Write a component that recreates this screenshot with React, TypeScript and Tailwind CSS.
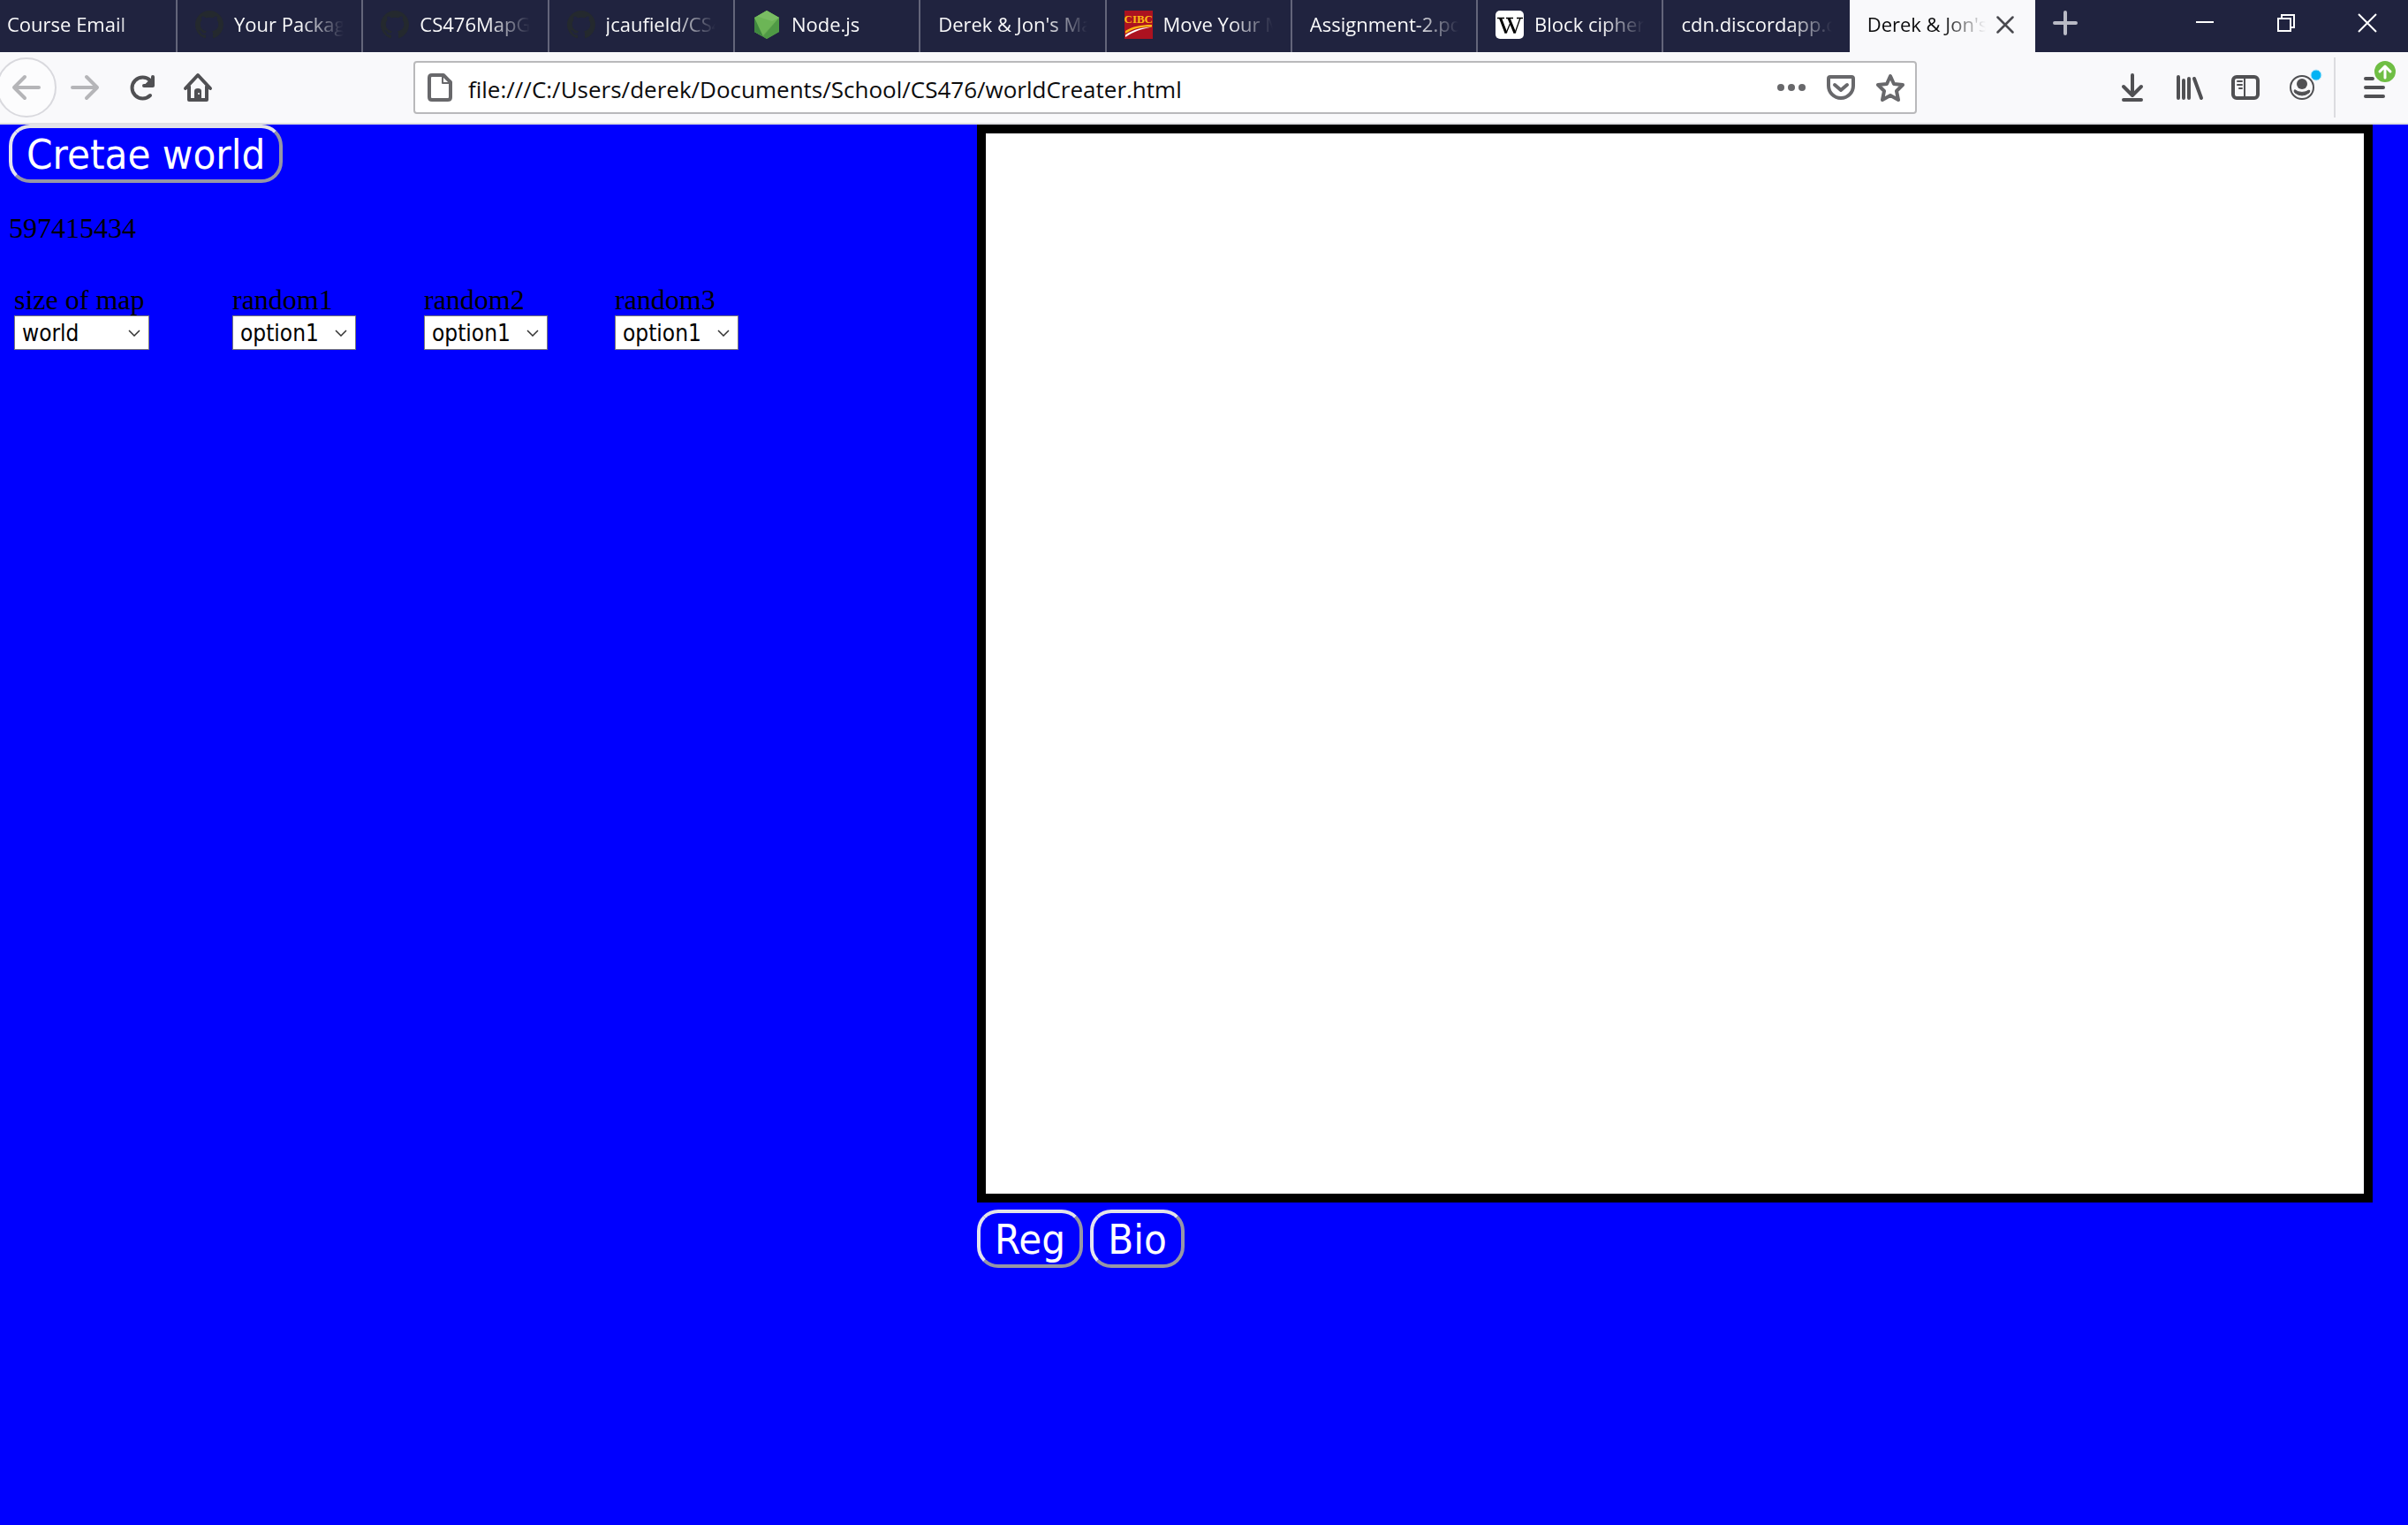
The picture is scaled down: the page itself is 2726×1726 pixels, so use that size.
import type { ReactNode } from "react";

const GITHUB =
  "M8 0C3.58 0 0 3.58 0 8c0 3.54 2.29 6.53 5.47 7.59.4.07.55-.17.55-.38 0-.19-.01-.82-.01-1.49-2.01.37-2.53-.49-2.69-.94-.09-.23-.48-.94-.82-1.13-.28-.15-.68-.52-.01-.53.63-.01 1.08.58 1.23.82.72 1.21 1.87.87 2.33.66.07-.52.28-.87.51-1.07-1.78-.2-3.64-.89-3.64-3.95 0-.87.31-1.59.82-2.15-.08-.2-.36-1.02.08-2.12 0 0 .67-.21 2.2.82.64-.18 1.32-.27 2-.27s1.36.09 2 .27c1.53-1.04 2.2-.82 2.2-.82.44 1.1.16 1.92.08 2.12.51.56.82 1.27.82 2.15 0 3.07-1.87 3.75-3.65 3.95.29.25.54.73.54 1.48 0 1.07-.01 1.93-.01 2.2 0 .21.15.46.55.38A8.01 8.01 0 0 0 16 8c0-4.42-3.58-8-8-8Z";

function GithubIcon() {
  return (
    <svg viewBox="0 0 16 16" className="size-8 shrink-0 fill-[#24292e]" aria-hidden="true">
      <path d={GITHUB} />
    </svg>
  );
}

function NodeIcon() {
  return (
    <svg viewBox="0 0 32 32" className="size-8 shrink-0" aria-hidden="true">
      <path d="M16 0 30 8v16l-14 8L2 24V8Z" fill="#5fa04e" />
      <path d="M16 0 30 8 11 29 2 24V8Z" fill="#6cb556" />
      <path d="M2 8 12 29.500 2 24Z" fill="#3f873f" />
      <path d="M16 0 30 8 22 12 5 6.500Z" fill="#79bd63" />
      <path d="M30 8v16l-14 8-4-2.500Z" fill="#4f9a45" />
    </svg>
  );
}

function CibcIcon() {
  return (
    <span className="relative block size-8 shrink-0 overflow-hidden bg-[#ac1220] text-center">
      <span className="block pt-0.5 font-['Liberation_Serif',serif] text-[13px] leading-4 font-bold text-[#fdb913]">
        CIBC
      </span>
      <svg viewBox="0 0 32 32" className="absolute inset-0 size-8" aria-hidden="true">
        <path d="M1 23C9 18 18 16 31 16v2.500C18 18 10 20 1 26Z" fill="#fdb913" />
        <path d="M1 27.500C9 22 17 19.500 31 18.500 18 21 11 23.500 1 30Z" fill="#fff" />
      </svg>
    </span>
  );
}

function WikipediaIcon() {
  return (
    <svg viewBox="0 0 32 32" className="size-8 shrink-0" aria-hidden="true">
      <rect width="32" height="32" rx="5" fill="#fff" />
      <g fill="none" stroke="#000">
        <path d="M5.500 8.500 12 25.500M15 8.500l7 17" strokeWidth="3" />
        <path d="m12 25.500 5.500-13M22 25.500l6-17" strokeWidth="1.300" />
        <path d="M2 8.500h8M12 8.500h8M24 8.500h7" strokeWidth="1.400" />
      </g>
    </svg>
  );
}

const tabs: { title: string; icon?: ReactNode }[] = [
  { title: "Your Packages", icon: <GithubIcon /> },
  { title: "CS476MapGen", icon: <GithubIcon /> },
  { title: "jcaufield/CS476", icon: <GithubIcon /> },
  { title: "Node.js", icon: <NodeIcon /> },
  { title: "Derek & Jon's Map" },
  { title: "Move Your Money", icon: <CibcIcon /> },
  { title: "Assignment-2.pdf" },
  { title: "Block cipher mode", icon: <WikipediaIcon /> },
  { title: "cdn.discordapp.com" },
];

function TabTitle({ children }: { children: ReactNode }) {
  return (
    <span className="min-w-0 flex-1 overflow-hidden text-left whitespace-nowrap [mask-image:linear-gradient(to_left,transparent,black_48px)]">
      {children}
    </span>
  );
}

function WindowButton({ label, children }: { label: string; children: ReactNode }) {
  return (
    <button type="button" aria-label={label} className="flex h-full w-[92px] items-center justify-center">
      <svg viewBox="0 0 22 22" className="mb-2 size-[22px] fill-none stroke-white stroke-2" aria-hidden="true">
        {children}
      </svg>
    </button>
  );
}

function TabBar() {
  return (
    <div className="flex h-[59px] bg-[#20233f] text-[22px] text-[#f9f9fa]">
      <div role="tablist" className="grid min-w-0 flex-1 grid-cols-[201px_repeat(10,minmax(0,1fr))]">
        <button type="button" role="tab" className="flex items-center border-r-2 border-[#63657a] pr-5 pb-1 pl-2">
          <TabTitle>Course Email</TabTitle>
        </button>
        {tabs.map((t, i) => (
          <button
            key={t.title}
            type="button"
            role="tab"
            className={`flex items-center gap-3 px-5 pb-1 ${i < tabs.length - 1 ? "border-r-2 border-[#63657a]" : ""}`}
          >
            {t.icon}
            <TabTitle>{t.title}</TabTitle>
          </button>
        ))}
        <div className="flex items-center gap-3 bg-[#f9f9fb] pr-6 pb-1 pl-5 text-[#0c0c0d]">
          <button type="button" role="tab" aria-selected="true" className="flex min-w-0 flex-1">
            <TabTitle>Derek &amp; Jon's Map</TabTitle>
          </button>
          <button type="button" aria-label="Close tab">
            <svg viewBox="0 0 20 20" className="size-5 fill-none stroke-[#4a4a4f] stroke-[2.500]" aria-hidden="true">
              <path d="m1.500 1.500 17 17M18.500 1.500l-17 17" strokeLinecap="round" />
            </svg>
          </button>
        </div>
      </div>
      <div className="flex w-[422px] shrink-0 items-center justify-between">
        <button type="button" aria-label="New tab" className="flex h-full w-[68px] items-center justify-center">
          <svg viewBox="0 0 28 28" className="mb-2 size-7 fill-none stroke-[#b9bac5] stroke-4" aria-hidden="true">
            <path d="M14 2v24M2 14h24" strokeLinecap="round" />
          </svg>
        </button>
        <div className="flex h-full">
          <WindowButton label="Minimize">
            <path d="M1 10h20" />
          </WindowButton>
          <WindowButton label="Restore">
            <path d="M2 6h14v14H2ZM6 6V2h14v14h-4" />
          </WindowButton>
          <WindowButton label="Close">
            <path d="m1 1 20 20M21 1 1 21" />
          </WindowButton>
        </div>
      </div>
    </div>
  );
}

function ToolButton({ label, children, muted }: { label: string; children: ReactNode; muted?: boolean }) {
  return (
    <button type="button" aria-label={label} className="flex h-full w-16 shrink-0 items-center justify-center">
      <svg
        viewBox="0 0 32 32"
        className={`size-8 overflow-visible fill-none stroke-4 [stroke-linecap:round] [stroke-linejoin:round] ${muted ? "stroke-[#b5b5b8]" : "stroke-[#505053]"}`}
        aria-hidden="true"
      >
        {children}
      </svg>
    </button>
  );
}

function FieldIcon({ label, children }: { label: string; children: ReactNode }) {
  return (
    <button type="button" aria-label={label} className="shrink-0">
      <svg
        viewBox="0 0 32 32"
        className="size-8 fill-none stroke-[#68686b] stroke-4 [stroke-linecap:round] [stroke-linejoin:round]"
        aria-hidden="true"
      >
        {children}
      </svg>
    </button>
  );
}

function Toolbar() {
  return (
    <div className="flex h-[82px] items-center border-b-2 border-[#dfdfe3] bg-[#f9f9fb]">
      <ToolButton label="Back" muted>
        <circle cx="14" cy="16" r="33" className="fill-[#fcfcfd] stroke-[#d9d9de] stroke-2" />
        <path d="M12 4 0 16l12 12M0 16h28" />
      </ToolButton>
      <ToolButton label="Forward" muted>
        <path d="m18 4 12 12-12 12M30 16H2" />
      </ToolButton>
      <ToolButton label="Reload">
        <path d="M26 25A12 12 0 1 1 26 8" />
        <path d="M29 4v10H19" />
        <path d="M28 6v7h-7Z" className="fill-[#505053] stroke-2" />
      </ToolButton>
      <ToolButton label="Home">
        <path d="M2 17 16 2l14 15M6 15v15h20V15" />
        <path d="M12 30V20q0-3 4-3t4 3v10Z" className="fill-[#505053] stroke-none" />
        <circle cx="17" cy="23" r="1" className="fill-white stroke-none" />
      </ToolButton>
      <div className="mx-[212px] flex h-[60px] min-w-0 flex-1 items-center rounded-sm border-2 border-[#b9b9bb] bg-white pr-3 pl-3">
        <FieldIcon label="Page information">
          <path d="M20 2H7Q4 2 4 5v22q0 3 3 3h18q3 0 3-3V10Z" />
          <path d="M19 3v8h8" className="stroke-2" />
        </FieldIcon>
        <input
          aria-label="Address"
          className="ml-4 min-w-0 flex-1 bg-transparent pt-1 text-[26px] text-[#0c0c0d] outline-none"
          defaultValue="file:///C:/Users/derek/Documents/School/CS476/worldCreater.html"
        />
        <div className="flex items-center gap-6">
          <FieldIcon label="Page actions">
            <g className="fill-[#68686b] stroke-none">
              <circle cx="4" cy="16" r="4" />
              <circle cx="16" cy="16" r="4" />
              <circle cx="28" cy="16" r="4" />
            </g>
          </FieldIcon>
          <FieldIcon label="Save to Pocket">
            <path d="M4 4h24q2 0 2 2v8a14 14 0 0 1-28 0V6q0-2 2-2Z" />
            <path d="m9 13 7 6 7-6" />
          </FieldIcon>
          <FieldIcon label="Bookmark">
            <path d="m16 3 4 9 10 1-7 7 2 10-9-5-9 5 2-10-7-7 10-1Z" />
          </FieldIcon>
        </div>
      </div>
      <ToolButton label="Downloads">
        <path d="M16 2v22M6 15l10 10 10-10M6 30h20" />
      </ToolButton>
      <ToolButton label="Library">
        <path d="M4 4v24M10 8v20M16 6v22M22 6l8 22" />
      </ToolButton>
      <ToolButton label="Sidebars">
        <rect x="2" y="4" width="28" height="24" rx="4" />
        <path d="M15 5v22M7 9h5M7 13h5M9 17h3" className="stroke-2" />
      </ToolButton>
      <ToolButton label="Account">
        <circle cx="16" cy="16" r="13" className="stroke-2" />
        <circle cx="16" cy="12" r="6" className="fill-[#505053] stroke-none" />
        <path d="M8 19q8 5 16 0 2 0 0 3-8 6-16 0-2-3 0-3Z" className="fill-[#505053] stroke-1" />
        <circle cx="32" cy="2" r="6" className="fill-[#00b3f4] stroke-[#b5e9fb] stroke-1" />
      </ToolButton>
      <div className="mr-2 ml-1 h-[68px] w-0.5 shrink-0 bg-[#dcdce0]" />
      <ToolButton label="Open menu">
        <path d="M10 6h8M10 16h20M10 26h20" />
        <circle cx="32" cy="-2" r="13" className="fill-[#6fbe44] stroke-[#f9f9fb] stroke-2" />
        <path d="M32 5V-8M26-2l6-6 6 6" className="stroke-white stroke-3" />
      </ToolButton>
      <div className="w-2.5 shrink-0" />
    </div>
  );
}

function OutsetButton({ children }: { children: ReactNode }) {
  return (
    <button
      type="button"
      className="h-[66px] rounded-3xl border-4 border-t-[#e3e3e8] border-r-[#9696a6] border-b-[#9696a6] border-l-[#e3e3f0] px-4 pt-0.5 font-['DejaVu_Sans_Condensed','Noto_Sans',sans-serif] text-[47px] leading-[56px] text-white"
    >
      {children}
    </button>
  );
}

const fields = [
  { id: "size", label: "size of map", value: "world", width: "w-[153px]" },
  { id: "r1", label: "random1", value: "option1", width: "w-[140px]" },
  { id: "r2", label: "random2", value: "option1", width: "w-[140px]" },
  { id: "r3", label: "random3", value: "option1", width: "w-[140px]" },
];

export default function App() {
  return (
    <div className="flex min-h-screen flex-col bg-[#0000ff] font-['Open_Sans','Noto_Sans',sans-serif]">
      <TabBar />
      <Toolbar />
      <main className="grid flex-1 grid-cols-[1106fr_1620fr] items-start">
        <section className="pl-2.5 font-['Liberation_Serif',serif] text-[32px] leading-9 text-black">
          <div className="flex">
            <OutsetButton>Cretae world</OutsetButton>
          </div>
          <p className="mt-[33px]">597415434</p>
          <div className="mt-[45px] grid grid-cols-[247px_217px_216px_auto] pl-1.5">
            {fields.map((f) => (
              <div key={f.id}>
                <label htmlFor={f.id} className="block">
                  {f.label}
                </label>
                <div className={`relative ${f.width}`}>
                  <select
                    id={f.id}
                    className="block h-[39px] w-full appearance-none rounded-none border border-[#7a7a7a] bg-white pl-2 font-['DejaVu_Sans_Condensed','Noto_Sans',sans-serif] text-[26px] leading-9 text-black"
                  >
                    <option>{f.value}</option>
                  </select>
                  <svg
                    viewBox="0 0 14 8"
                    className="pointer-events-none absolute top-4 right-2.5 h-2 w-3.5 fill-none stroke-[#333] stroke-[1.500]"
                    aria-hidden="true"
                  >
                    <path d="m1 1 6 6 6-6" />
                  </svg>
                </div>
              </div>
            ))}
          </div>
        </section>
        <section className="pr-10">
          <canvas aria-label="Map" className="block aspect-[1580/1220] w-full border-10 border-black bg-white" />
          <div className="mt-2 flex gap-2">
            <OutsetButton>Reg</OutsetButton>
            <OutsetButton>Bio</OutsetButton>
          </div>
        </section>
      </main>
    </div>
  );
}
